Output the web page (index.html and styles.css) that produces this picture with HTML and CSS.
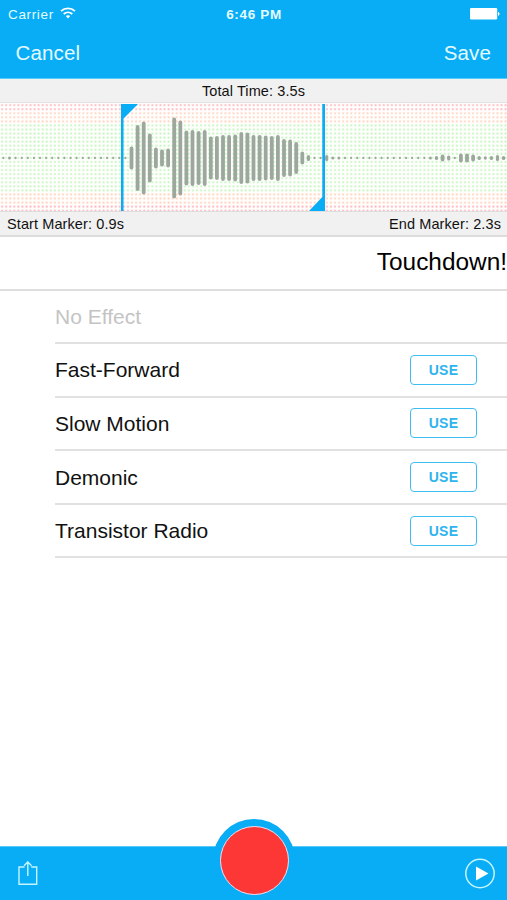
FILE: index.html
```html
<!DOCTYPE html>
<html lang="en">
<head>
<meta charset="utf-8">
<title>Recording editor</title>
<link rel="stylesheet" href="styles.css">
</head>
<body>
<div class="app">
  <header class="top">
    <div class="status">
      <div class="carrier"><span>Carrier</span>
        <svg class="wifi" width="16" height="12" viewBox="0 0 16 12" fill="none" stroke="#fff" stroke-width="1.9"><path d="M1 4.1C5 .5 11 .5 15 4.1M3.7 7C6.2 4.8 9.8 4.8 12.3 7"/><path d="M5.8 9C7.1 7.9 8.9 7.9 10.2 9L8 11.4Z" fill="#fff" stroke="none"/></svg>
      </div>
      <span class="clock">6:46 PM</span>
      <svg class="battery" width="30" height="12" viewBox="0 0 30 12" fill="#fff"><rect width="27.2" height="11.6" rx="1.3"/><path d="M28 4c2 .4 2 3.4 0 3.8z"/></svg>
    </div>
    <nav class="nav"><span>Cancel</span><span>Save</span></nav>
  </header>
  <div class="total"><span>Total Time: 3.5s</span></div>
  <div class="wave"><svg id="wave" width="507" height="108" viewBox="0 0 507 108">
    <defs>
      <pattern id="red" width="4.06" height="4.06" patternUnits="userSpaceOnUse"><rect x="1.2" y="1.2" width="1.8" height="1.8" fill="#ffb0bb"/></pattern>
      <pattern id="orange" width="4.06" height="4.06" patternUnits="userSpaceOnUse"><rect x="1.2" y="1.2" width="1.8" height="1.8" fill="#ffd0ba"/></pattern>
      <pattern id="green" width="4.06" height="4.06" patternUnits="userSpaceOnUse"><rect x="1.2" y="1.2" width="1.8" height="1.8" fill="#bdf6bd"/></pattern>
    </defs>
    <rect width="507" height="108" fill="#fffefc"/>
    <rect width="507" height="8.1" fill="url(#red)"/>
    <rect y="8.1" width="507" height="12.2" fill="url(#orange)"/>
    <rect y="20.3" width="507" height="69" fill="url(#green)"/>
    <rect y="89.3" width="507" height="12.2" fill="url(#orange)"/>
    <rect y="101.5" width="507" height="6.5" fill="url(#red)"/>
    <g id="bars" stroke="#9da79e" stroke-linecap="round"></g>
    <g fill="#08adf5"><path d="M121 1H138L123.5 15.5V108H121Z"/><path d="M322.3 1H325V108H309L322.3 94Z"/></g>
  </svg></div>
  <div class="markers"><span>Start Marker: 0.9s</span><span>End Marker: 2.3s</span></div>
  <div class="title"><span>Touchdown!</span></div>
  <ul class="effects">
    <li class="off"><span>No Effect</span></li>
    <li><span>Fast-Forward</span><button>USE</button></li>
    <li><span>Slow Motion</span><button>USE</button></li>
    <li><span>Demonic</span><button>USE</button></li>
    <li><span>Transistor Radio</span><button>USE</button></li>
  </ul>
  <footer class="toolbar">
    <svg width="20" height="26" viewBox="0 0 20 26" fill="none" stroke="#c4f5ff" stroke-width="1.4"><path d="M6.5 6H1V23.3H18.7V6H13.2M9.8 15V1.5M6 4.7L9.8 .9L13.6 4.7"/></svg>
    <svg width="32" height="32" viewBox="0 0 32 32"><circle cx="16" cy="15.5" r="14.2" fill="none" stroke="#c4f5ff" stroke-width="1.5"/><path d="M12 8.5V22.5L24.5 15.5Z" fill="#fff"/></svg>
    <div class="record"><div class="dot"></div></div>
  </footer>
</div>
<script src="wave.js"></script>
</body>
</html>
```
FILE: styles.css
```css
* { box-sizing: border-box; }
body { margin: 0; background: #fff; font-family: "Liberation Sans", Arial, sans-serif; color: #111; }
.app { width: 507px; height: 900px; display: flex; flex-direction: column; overflow: hidden; }
.top { height: 79px; background: #08adf5; color: #e4fbff; flex: none; border-bottom: 1px solid #55cdf9; }
.status { height: 27px; padding: 1px 7px 0 8px; display: grid; grid-template-columns: 1fr auto 1fr; align-items: center; font-size: 13.5px; }
.carrier { display: flex; align-items: center; gap: 6px; letter-spacing: .65px; }
.wifi { margin-top: -2px; }
.clock { font-weight: bold; letter-spacing: .65px; }
.battery { justify-self: end; }
.nav { height: 51px; padding: 0 16px 0 15.5px; display: flex; justify-content: space-between; align-items: center; font-size: 20.5px; letter-spacing: .15px; }
.total { height: 24px; flex: none; background: #f1f1f1; text-align: center; font-size: 14.5px; letter-spacing: .1px; line-height: 25px; border-bottom: 1px solid #e2e2e2; }
.wave { height: 108px; flex: none; }
.wave svg { display: block; }
.markers { height: 26px; flex: none; padding: 0 6px 0 7px; display: flex; justify-content: space-between; background: #f1f1f1; font-size: 14.5px; letter-spacing: .1px; line-height: 24px; border-top: 1px solid #dedede; border-bottom: 2px solid #dcdcdc; }
.title { height: 53.5px; flex: none; text-align: right; font-size: 24.4px; line-height: 50px; color: #000; border-bottom: 2px solid #dedede; }
.effects { list-style: none; margin: 0; padding: 0 0 0 55px; flex: 1; }
.effects li { height: 53.6px; padding: 1px 30px 0 0; display: flex; align-items: center; justify-content: space-between; border-bottom: 2px solid #e1e1e1; font-size: 21px; }
.effects .off { color: #c4c4c4; }
.effects button { width: 67px; height: 30px; margin-top: -1px; padding: 0; border: 1.5px solid #3fbdf3; border-radius: 4px; background: #fff; color: #2fb4ee; font: bold 14px "Liberation Sans", Arial, sans-serif; letter-spacing: .2px; }
.toolbar { height: 54px; flex: none; position: relative; padding: 1px 11px 0 18px; display: flex; align-items: center; justify-content: space-between; background: #08adf5; border-top: 1px solid #58c8f6; }
.record { position: absolute; left: 213px; top: -28px; width: 82px; height: 82px; border-radius: 50%; background: #08adf5; display: flex; align-items: center; justify-content: center; }
.dot { width: 69px; height: 69px; border-radius: 50%; background: #fd3636; border: 1.5px solid #eee0f0; }
```
FILE: wave.js
```js
// Bar heights of the audio clip, one sample every 6.1px.
const samples = [
  0, 2, 0, 0, 0, 0, 0, 0, 0, 0, 0, 0, 0, 0, 0, 0, 0, 0, 0, 0, 0,
  23, 66, 73, 49, 21, 17, 19, 81, 75, 55, 56, 54, 56, 43, 44, 46,
  46, 47, 52, 51, 46, 46, 45, 44, 46, 38, 37, 32, 13, 6, 0, 0, 6, 2,
  2, 0, 0, 0, 0, 0, 0, 0, 0, 0, 0, 0, 0, 0, 0, 2, 4, 7, 5, 0, 9, 9, 7, 4, 3, 4, 6, 4
];
const group = document.getElementById('bars');
samples.forEach((h, i) => {
  const line = document.createElementNS('http://www.w3.org/2000/svg', 'line');
  const width = h > 6 ? 3.8 : h > 2 ? 3.2 : h ? 3 : 2.2;
  const half = Math.max(0.05, (h - width) / 2);
  const x = 3.4 + i * 6.1;
  line.setAttribute('x1', x);
  line.setAttribute('x2', x);
  line.setAttribute('y1', 55 - half);
  line.setAttribute('y2', 55 + half);
  line.setAttribute('stroke-width', width);
  group.appendChild(line);
});
```
